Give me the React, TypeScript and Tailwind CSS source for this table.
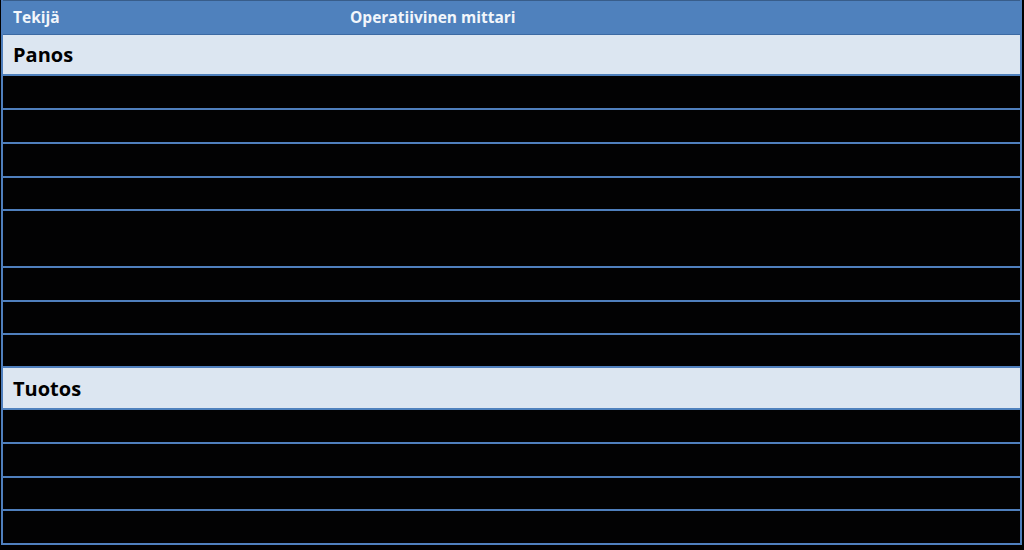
import React from "react";

const rowH = [34, 34, 34, 33, 57, 34, 33, 33];
const rowH2 = [34, 34, 33, 34];

function Row({ h }: { h: number }) {
  return <div className="border-b-2 border-[#4f7fbd] bg-[#020203]" style={{ height: h }} />;
}

export default function App() {
  return (
    <div className="w-[1024px] h-[550px] bg-black overflow-hidden" style={{ fontFamily: "'Open Sans', Lato, sans-serif" }}>
      <div className="ml-[1px] w-[1021px] border-l-2 border-r-2 border-[#4f7fbd]">
        <div className="h-[35px] bg-[#4f81bd] border-t border-t-[#385d8a] border-b border-b-[#3c6aa3] flex items-center text-[15.5px] font-bold text-[#f2f6fb]">
          <div className="w-[347px] pl-[10px]">Tekijä</div>
          <div>Operatiivinen mittari</div>
        </div>
        <div className="h-[41px] bg-[#dce6f1] border-b-2 border-[#4f81bd] flex items-center pl-[10px] pt-[1px] text-[20px] font-bold text-black">
          Panos
        </div>
        {rowH.map((h, i) => (
          <Row key={i} h={h} />
        ))}
        <div className="h-[42px] bg-[#dce6f1] border-b-2 border-[#4f81bd] flex items-center pl-[10px] pt-[1px] text-[20px] font-bold text-black">
          Tuotos
        </div>
        {rowH2.map((h, i) => (
          <Row key={i} h={h} />
        ))}
      </div>
    </div>
  );
}
